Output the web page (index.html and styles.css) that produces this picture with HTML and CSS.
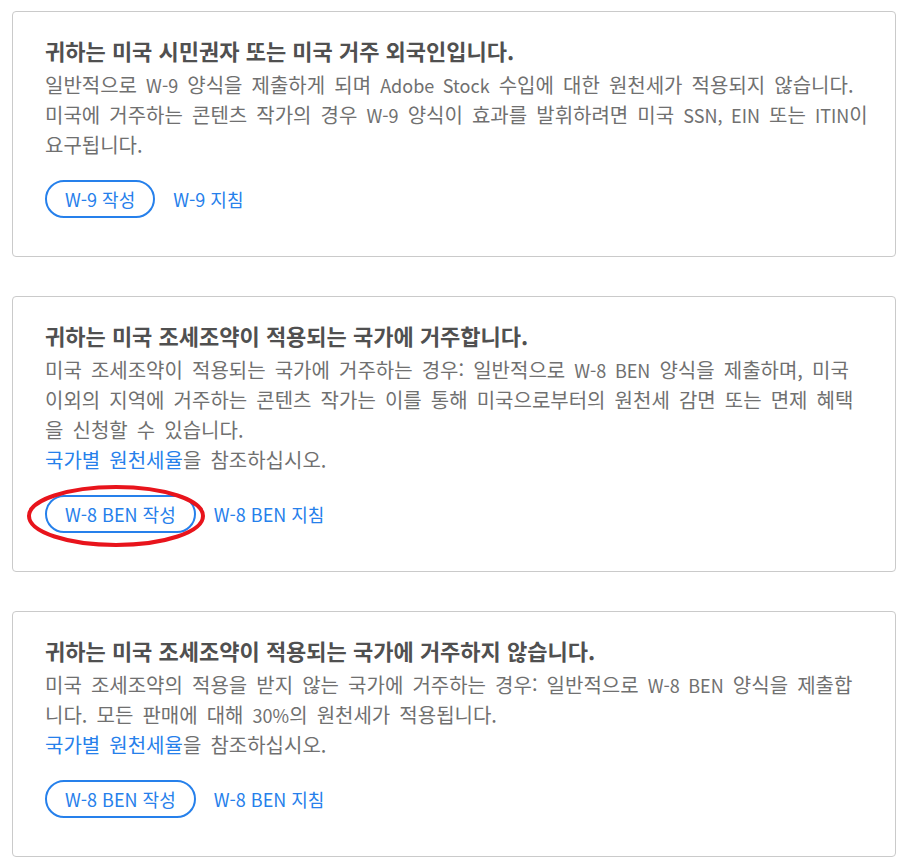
FILE: index.html
```html
<!DOCTYPE html>
<html lang="ko">
<head>
<meta charset="utf-8">
<link rel="stylesheet" href="styles.css">
</head>
<body>
<div class="page">
  <section class="card">
    <h3 class="title">귀하는 미국 시민권자 또는 미국 거주 외국인입니다.</h3>
    <p class="body">일반적으로 <span class="en">W-9</span> 양식을 제출하게 되며 <span class="en">Adobe Stock</span> 수입에 대한 원천세가 적용되지 않습니다. 미국에 거주하는 콘텐츠 작가의 경우 <span class="en">W-9</span> 양식이 효과를 발휘하려면 미국 <span class="en">SSN, EIN</span> 또는 <span class="en">ITIN</span>이 요구됩니다.</p>
    <div class="actions">
      <a class="btn">W-9 작성</a>
      <a class="link">W-9 지침</a>
    </div>
  </section>
  <section class="card">
    <h3 class="title">귀하는 미국 조세조약이 적용되는 국가에 거주합니다.</h3>
    <p class="body">미국 조세조약이 적용되는 국가에 거주하는 경우: 일반적으로 <span class="en">W-8 BEN</span> 양식을 제출하며, 미국 이외의 지역에 거주하는 콘텐츠 작가는 이를 통해 미국으로부터의 원천세 감면 또는 면제 혜택을 신청할 수 있습니다.<br><span class="blue">국가별 원천세율</span>을 참조하십시오.</p>
    <div class="actions">
      <a class="btn">W-8 BEN 작성</a>
      <a class="link">W-8 BEN 지침</a>
      <svg class="mark" width="184" height="70" viewBox="0 0 184 70"><ellipse cx="92" cy="35" rx="87" ry="29" fill="none" stroke="#e8141c" stroke-width="4"/></svg>
    </div>
  </section>
  <section class="card">
    <h3 class="title">귀하는 미국 조세조약이 적용되는 국가에 거주하지 않습니다.</h3>
    <p class="body">미국 조세조약의 적용을 받지 않는 국가에 거주하는 경우: 일반적으로 <span class="en">W-8 BEN</span> 양식을 제출합니다. 모든 판매에 대해 <span class="en">30%</span>의 원천세가 적용됩니다.<br><span class="blue">국가별 원천세율</span>을 참조하십시오.</p>
    <div class="actions">
      <a class="btn">W-8 BEN 작성</a>
      <a class="link">W-8 BEN 지침</a>
    </div>
  </section>
</div>
</body>
</html>
```
FILE: styles.css
```css
html, body {
  margin: 0;
  padding: 0;
  background: #ffffff;
}
body {
  font-family: "Noto Sans CJK KR", sans-serif;
}
.page {
  display: flex;
  flex-direction: column;
  gap: 39px;
  padding: 11px 11px 0 12px;
}
.card {
  border: 1px solid #cacaca;
  border-radius: 4px;
  padding: 23px 26px 38px 32px;
}
.title {
  margin: 0 0 5px 0;
  font-size: 22px;
  line-height: 30px;
  font-weight: 700;
  color: #505050;
}
.body {
  margin: 0;
  font-size: 20px;
  line-height: 30px;
  word-spacing: 3.5px;
  color: #707070;
}
.en {
  font-size: 18px;
}
.blue {
  color: #2680eb;
}
.actions {
  position: relative;
  display: flex;
  align-items: center;
  gap: 18px;
  margin-top: 20px;
}
.btn {
  display: inline-flex;
  align-items: center;
  justify-content: center;
  height: 38px;
  box-sizing: border-box;
  padding: 0 18px;
  border: 2px solid #2680eb;
  border-radius: 19px;
  color: #2680eb;
  font-size: 18px;
}
.link {
  color: #2680eb;
  font-size: 18px;
}
.mark {
  position: absolute;
  left: -21px;
  top: -14px;
}
```
